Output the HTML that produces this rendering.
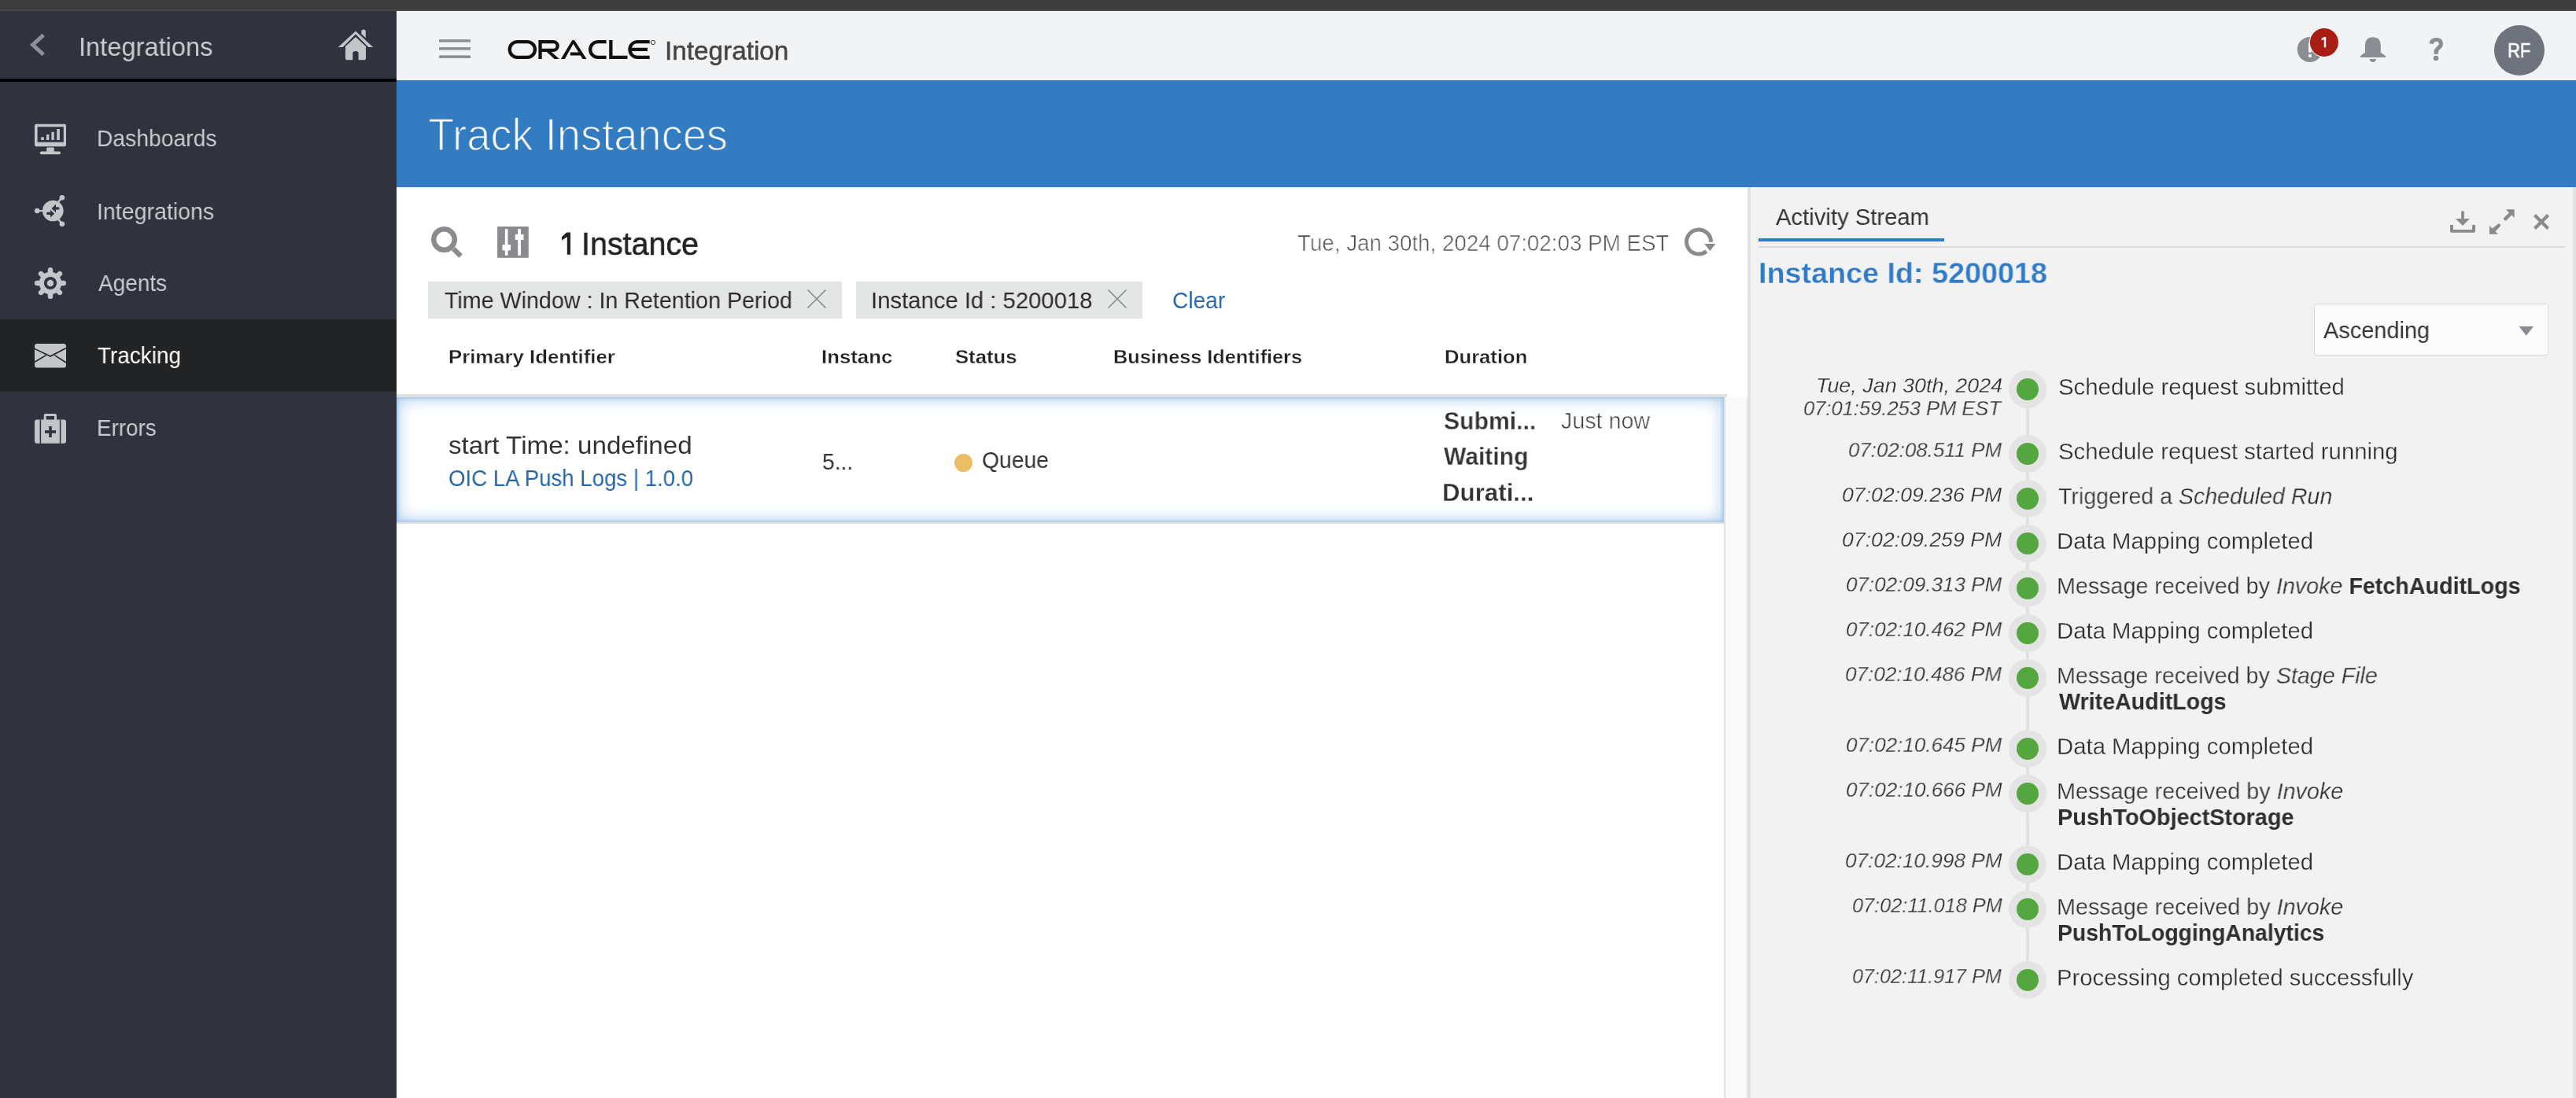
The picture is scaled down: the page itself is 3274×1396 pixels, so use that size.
<!DOCTYPE html>
<html><head><meta charset="utf-8">
<style>
html,body{margin:0;padding:0;width:3274px;height:1396px;overflow:hidden;background:#fff;font-family:"Liberation Sans",sans-serif;}
.a{position:absolute;}
.t{position:absolute;white-space:pre;line-height:1;transform-origin:0 0;will-change:transform;font-family:"Liberation Sans",sans-serif;}
svg{position:absolute;overflow:visible;}
</style></head><body>
<!-- top bar -->
<div class="a" style="left:0;top:0;width:3274px;height:12px;background:#3c3c3c"></div>
<div class="a" style="left:0;top:12px;width:3274px;height:2px;background:#474946"></div>
<!-- sidebar -->
<div class="a" style="left:0;top:14px;width:504px;height:1382px;background:#30323d"></div>
<div class="a" style="left:0;top:100px;width:504px;height:4px;background:#000"></div>
<div class="a" style="left:0;top:406px;width:504px;height:92px;background:#222325"></div>
<!-- header -->
<div class="a" style="left:504px;top:14px;width:2770px;height:88px;background:#f2f3f5"></div>
<!-- blue band -->
<div class="a" style="left:504px;top:102px;width:2770px;height:136px;background:#337cc2"></div>
<!-- main white -->
<div class="a" style="left:504px;top:238px;width:1717px;height:1158px;background:#ffffff"></div>
<!-- chips -->
<div class="a" style="left:544px;top:358px;width:526px;height:47px;background:#e4e6e6"></div>
<div class="a" style="left:1088px;top:358px;width:364px;height:47px;background:#e4e6e6"></div>
<!-- table header line -->
<div class="a" style="left:504px;top:501px;width:1691px;height:4px;background:#dfe0e0"></div>
<!-- selected row -->
<div class="a" style="left:504px;top:505px;width:1687px;height:159px;background:#fff;box-shadow:inset 0 0 4px 1px #9dc0e8, inset 0 0 20px 2px #a9caed"></div>
<div class="a" style="left:504px;top:664px;width:1687px;height:2px;background:#e0e0e0"></div>
<!-- scroll track -->
<div class="a" style="left:2191px;top:505px;width:2px;height:891px;background:#e3e3e3"></div>
<div class="a" style="left:2193px;top:505px;width:26px;height:891px;background:#f9f9f9"></div>
<div class="a" style="left:2219px;top:505px;width:2px;height:891px;background:#efefef"></div>
<!-- splitter -->
<div class="a" style="left:2221px;top:238px;width:4px;height:1158px;background:#dfe1e1"></div>
<!-- right panel -->
<div class="a" style="left:2225px;top:238px;width:1045px;height:1158px;background:#f2f2f2"></div>
<div class="a" style="left:3270px;top:238px;width:4px;height:1158px;background:#e0e2e2"></div>
<div class="a" style="left:2235px;top:303px;width:236px;height:4px;background:#2f7bd0"></div>
<div class="a" style="left:2235px;top:313px;width:1025px;height:2px;background:#dcdcdc"></div>
<!-- dropdown -->
<div class="a" style="left:2941px;top:386px;width:296px;height:64px;background:#fcfcfc;border:1px solid #d9d9d9;border-radius:3px"></div>
<!-- queue dot -->
<div class="a" style="left:1212.5px;top:576.5px;width:23px;height:23px;border-radius:50%;background:#ebbd64"></div>
<!-- avatar -->
<div class="a" style="left:3170px;top:32px;width:64px;height:64px;border-radius:50%;background:#6f737e"></div>

<!-- ICONS -->
<!-- sidebar chevron -->
<svg style="left:0;top:0" width="1" height="1"><polyline points="55.2,44.6 41.6,57 55.2,69.4" fill="none" stroke="#8d9096" stroke-width="5" stroke-linecap="butt"/></svg>
<!-- home -->
<svg style="left:0;top:0" width="1" height="1">
<path d="M429.8 60 L452 39.6 L474.2 60 L468.2 60 L452 43.4 L435.8 60 Z" fill="#c3c5c9"/>
<path d="M459.3 40 Q459.3 37.5 462 37.5 Q464.8 37.5 464.8 40 V48.2 L459.3 43.2 Z" fill="#c3c5c9"/>
<path d="M439 59 L452 47 L465 59 L465 74.3 Q465 76.3 463 76.3 L455.6 76.3 L455.6 67.5 Q455.6 65 452 65 Q448.3 65 448.3 67.5 L448.3 76.3 L441 76.3 Q439 76.3 439 74.3 Z" fill="#c3c5c9"/>
</svg>
<!-- sidebar icons -->
<svg style="left:0;top:0" width="1" height="1" fill="#c3c5c9">
<!-- dashboard -->
<path fill-rule="evenodd" d="M46 157.8 H82 Q84 157.8 84 159.8 V184.2 Q84 186.2 82 186.2 H46 Q44 186.2 44 184.2 V159.8 Q44 157.8 46 157.8 Z M47.6 161.2 V180.7 H80.8 V161.2 Z"/>
<rect x="52.1" y="174.3" width="3.7" height="3.7"/><rect x="59" y="170.9" width="3.4" height="7.1"/><rect x="65.4" y="167.8" width="3.4" height="10.2"/><rect x="72.2" y="164" width="3.7" height="14"/>
<rect x="59.2" y="187.6" width="9.6" height="6.5" rx="1.2"/><rect x="50.8" y="192.6" width="26.2" height="3.6" rx="1.8"/>
<!-- integrations -->
<circle cx="67.3" cy="268" r="13.3"/>
<circle cx="47.2" cy="268" r="3.3"/><circle cx="78.9" cy="251.2" r="3.3"/><circle cx="78.9" cy="284.7" r="3.3"/>
<path d="M47 267.1 H56 V268.9 H47Z M77.6 250.5 L79.8 251.8 L73.5 259.5 L71.5 258Z M77.6 285.1 L79.8 283.8 L73.5 276.1 L71.5 277.6Z"/>
<g fill="#30323d"><path d="M65.5 264.9 L71 259.6 V263.3 H74 A1.6 1.6 0 0 1 74 266.5 H71 V270.2 Z"/><path d="M69.4 271.4 L64 266.2 V269.8 H60.6 A1.6 1.6 0 0 0 60.6 273 H64 V276.6 Z"/></g><line x1="62.3" y1="264.3" x2="71.2" y2="272.7" stroke="#c3c5c9" stroke-width="1.3"/>
<!-- gear -->
<g transform="translate(64 360)"><circle r="14.3"/><rect x="-3.2" y="-20.1" width="6.4" height="10" rx="3.2" transform="rotate(0)"/><rect x="-3.2" y="-20.1" width="6.4" height="10" rx="3.2" transform="rotate(45)"/><rect x="-3.2" y="-20.1" width="6.4" height="10" rx="3.2" transform="rotate(90)"/><rect x="-3.2" y="-20.1" width="6.4" height="10" rx="3.2" transform="rotate(135)"/><rect x="-3.2" y="-20.1" width="6.4" height="10" rx="3.2" transform="rotate(180)"/><rect x="-3.2" y="-20.1" width="6.4" height="10" rx="3.2" transform="rotate(225)"/><rect x="-3.2" y="-20.1" width="6.4" height="10" rx="3.2" transform="rotate(270)"/><rect x="-3.2" y="-20.1" width="6.4" height="10" rx="3.2" transform="rotate(315)"/><circle r="8.1" fill="#30323d"/><circle r="4.25"/></g>
<!-- envelope -->
<rect x="44" y="437" width="40" height="30.4" rx="3"/>
<polyline points="44,443.4 64,453 84,442.5" fill="none" stroke="#222325" stroke-width="1.6"/>
<line x1="44" y1="460.3" x2="58.6" y2="451.6" stroke="#222325" stroke-width="1.6"/>
<line x1="84" y1="461" x2="69.4" y2="451.6" stroke="#222325" stroke-width="1.6"/>
<!-- briefcase -->
<path fill-rule="evenodd" d="M57.7 526 H70 Q72 526 72 528 V534 H69 V529 H58.7 V534 H55.7 V528 Q55.7 526 57.7 526 Z"/>
<rect x="44" y="533.6" width="40" height="30.2" rx="3"/>
<rect x="50.6" y="533.6" width="1.6" height="30.2" fill="#30323d"/><rect x="75.8" y="533.6" width="1.6" height="30.2" fill="#30323d"/>
<rect x="62.2" y="542" width="3.6" height="14" fill="#30323d"/><rect x="57" y="547.2" width="14" height="3.6" fill="#30323d"/>
</svg>
<!-- hamburger -->
<svg style="left:0;top:0" width="1" height="1" fill="#8b8e92">
<rect x="558" y="50.1" width="40" height="3.5"/><rect x="558" y="60.1" width="40" height="3.5"/><rect x="558" y="70.4" width="40" height="3.5"/>
</svg>
<!-- ORACLE logo -->
<svg style="left:0;top:0" width="1" height="1" fill="#111">
<path fill-rule="evenodd" d="M657.6 51 H670.1 A12 12 0 0 1 670.1 75 H657.6 A12 12 0 0 1 657.6 51 Z M657.6 55.3 A7.7 7.7 0 0 0 657.6 70.7 H670.1 A7.7 7.7 0 0 0 670.1 55.3 Z"/>
<path fill-rule="evenodd" d="M684.4 51 H703.3 A7.5 7.5 0 0 1 703.3 66 H700.8 L710.8 75 H704.6 L694.8 66 H688.7 V75 H684.4 Z M688.7 55.3 V61.7 H703.3 A3.2 3.2 0 0 0 703.3 55.3 Z"/>
<path d="M712.9 75 L727 51.5 Q728.7 49.8 730.4 51.5 L745.5 75 H740.5 L728.7 55.8 L717.8 75 Z M724.8 66.6 H735.3 L737.7 70.5 H724.8 Z"/>
<path d="M760 51 H770.6 V55.3 H760 A7.7 7.7 0 0 0 760 70.7 H770.6 V75 H760 A12 12 0 0 1 760 51 Z"/>
<path d="M774.2 51 H778.5 V70.7 H797.5 V75 H774.2 Z"/>
<path d="M810.3 51 H825.7 V55.3 H810.3 A7.7 7.7 0 0 0 802.95 60.7 H823 V65 H802.95 A7.7 7.7 0 0 0 810.3 70.7 H825.7 V75 H810.3 A12 12 0 0 1 810.3 51 Z"/>
<circle cx="830" cy="54" r="2.7" fill="none" stroke="#111" stroke-width="0.8"/>
</svg>
<!-- header right icons -->
<svg style="left:0;top:0" width="1" height="1" fill="#8a8d92">
<circle cx="2935.8" cy="62.9" r="16"/>
<rect x="2934.1" y="53.2" width="3.8" height="13.6" rx="1.9" fill="#fff"/><circle cx="2936" cy="70.9" r="2.1" fill="#fff"/>
<circle cx="2953.9" cy="53.9" r="19" fill="#f2f3f5"/>
<circle cx="2953.9" cy="53.9" r="18" fill="#a81e15"/>
<path d="M2953.5 46.9 H2956.2 V60.3 H2953.8 V49.9 L2950.5 51.2 V49.2 Z" fill="#fff"/>
<!-- bell -->
<path d="M3016 47.2 Q3025.8 47.2 3025.8 58 V66.8 L3032.1 71.2 V72.9 H2999.8 V71.2 L3006 66.8 V58 Q3006 47.2 3016 47.2 Z"/>
<path d="M3011.7 74.9 H3020 A4.15 4.15 0 0 1 3011.7 74.9 Z"/>
<!-- question -->
<path d="M3087.5 55.2 Q3088.5 48 3096.5 48 Q3105 48 3105 55.7 Q3105 59.2 3101.5 62.2 Q3098.8 64.5 3098.8 66 V68.7 H3093.5 V65.5 Q3093.5 62.5 3096.8 59.8 Q3099.8 57.3 3099.8 55.7 Q3099.8 52.8 3096.5 52.8 Q3093.5 52.8 3092.8 56 Z"/>
<circle cx="3096" cy="74" r="3.2"/>
</svg>
<!-- toolbar icons -->
<svg style="left:0;top:0" width="1" height="1" fill="#8a8b8e">
<circle cx="564.5" cy="304.5" r="13.25" fill="none" stroke="#8a8b8e" stroke-width="6.5"/>
<path d="M574 318.5 L578.5 314 L587.8 323.3 L583.3 327.8 Z"/>
<path d="M720.8 295.5 H725 V323.8 H720.8 V301.2 L714 305.4 V301.3 L720 295.5 Z" fill="#222"/>
<rect x="632.1" y="288" width="39.7" height="39.8"/>
<g fill="#fff"><rect x="641.8" y="291.1" width="3.7" height="33.7"/><rect x="638.4" y="311.1" width="10.6" height="7.2"/>
<rect x="658.2" y="291.1" width="3.8" height="33.7"/><rect x="654.8" y="297.9" width="10.7" height="7.1"/></g>
<!-- refresh -->
<path d="M2174.5 307.8 A15.5 15.5 0 1 0 2168.8 319.5" fill="none" stroke="#8a8b8e" stroke-width="5"/>
<path d="M2166.2 310 H2180.5 L2173.4 319 Z"/>
</svg>
<!-- chip X -->
<svg style="left:0;top:0" width="1" height="1" stroke="#8a8d91" stroke-width="1.7">
<line x1="1026.5" y1="368.5" x2="1049.5" y2="391.5"/><line x1="1049.5" y1="368.5" x2="1026.5" y2="391.5"/>
<line x1="1408.5" y1="368.5" x2="1431.5" y2="391.5"/><line x1="1431.5" y1="368.5" x2="1408.5" y2="391.5"/>
</svg>
<!-- right panel icons -->
<svg style="left:0;top:0" width="1" height="1" fill="#8a8b8e">
<path d="M3114 286 H3117.9 V292 H3142.1 V286 H3146 V294 Q3146 295.8 3144 295.8 H3116 Q3114 295.8 3114 294 Z"/>
<rect x="3128.1" y="268" width="3.8" height="11" rx="1.9"/>
<path d="M3120.9 278 H3139 L3130 287 Z"/>
<path d="M3184.9 266.2 H3195.7 V276.9 L3192.2 273.4 L3185.8 279.8 Q3184 281.2 3182.6 279.8 Q3181.2 278.4 3182.6 276.8 L3189 270.4 Z"/>
<path d="M3164 287 V297.7 H3175 L3171.5 294.2 L3177.5 288 Q3178.8 286.4 3177.4 285 Q3176 283.6 3174.4 285 L3167.6 290.6 Z"/>
<path d="M3220 275 L3223 272 L3230 279 L3237 272 L3240 275 L3233 282 L3240 289 L3237 292 L3230 285 L3223 292 L3220 289 L3227 282 Z"/>
<path d="M3201.6 415 H3220 L3210.8 426.7 Z"/>
</svg>

<div style="position:absolute;left:2575px;top:495px;width:4px;height:750.5px;background:#e1e1e1"></div><div style="position:absolute;left:2553px;top:471px;width:48px;height:48px;border-radius:50%;background:#e4e4e4"></div><div style="position:absolute;left:2563px;top:481px;width:28px;height:28px;border-radius:50%;background:#54a73f"></div><div style="position:absolute;left:2553px;top:553px;width:48px;height:48px;border-radius:50%;background:#e4e4e4"></div><div style="position:absolute;left:2563px;top:563px;width:28px;height:28px;border-radius:50%;background:#54a73f"></div><div style="position:absolute;left:2553px;top:610px;width:48px;height:48px;border-radius:50%;background:#e4e4e4"></div><div style="position:absolute;left:2563px;top:620px;width:28px;height:28px;border-radius:50%;background:#54a73f"></div><div style="position:absolute;left:2553px;top:667px;width:48px;height:48px;border-radius:50%;background:#e4e4e4"></div><div style="position:absolute;left:2563px;top:677px;width:28px;height:28px;border-radius:50%;background:#54a73f"></div><div style="position:absolute;left:2553px;top:724px;width:48px;height:48px;border-radius:50%;background:#e4e4e4"></div><div style="position:absolute;left:2563px;top:734px;width:28px;height:28px;border-radius:50%;background:#54a73f"></div><div style="position:absolute;left:2553px;top:781px;width:48px;height:48px;border-radius:50%;background:#e4e4e4"></div><div style="position:absolute;left:2563px;top:791px;width:28px;height:28px;border-radius:50%;background:#54a73f"></div><div style="position:absolute;left:2553px;top:838px;width:48px;height:48px;border-radius:50%;background:#e4e4e4"></div><div style="position:absolute;left:2563px;top:848px;width:28px;height:28px;border-radius:50%;background:#54a73f"></div><div style="position:absolute;left:2553px;top:927.5px;width:48px;height:48px;border-radius:50%;background:#e4e4e4"></div><div style="position:absolute;left:2563px;top:937.5px;width:28px;height:28px;border-radius:50%;background:#54a73f"></div><div style="position:absolute;left:2553px;top:984.5px;width:48px;height:48px;border-radius:50%;background:#e4e4e4"></div><div style="position:absolute;left:2563px;top:994.5px;width:28px;height:28px;border-radius:50%;background:#54a73f"></div><div style="position:absolute;left:2553px;top:1074.5px;width:48px;height:48px;border-radius:50%;background:#e4e4e4"></div><div style="position:absolute;left:2563px;top:1084.5px;width:28px;height:28px;border-radius:50%;background:#54a73f"></div><div style="position:absolute;left:2553px;top:1131.5px;width:48px;height:48px;border-radius:50%;background:#e4e4e4"></div><div style="position:absolute;left:2563px;top:1141.5px;width:28px;height:28px;border-radius:50%;background:#54a73f"></div><div style="position:absolute;left:2553px;top:1221.5px;width:48px;height:48px;border-radius:50%;background:#e4e4e4"></div><div style="position:absolute;left:2563px;top:1231.5px;width:28px;height:28px;border-radius:50%;background:#54a73f"></div>
<div class="t" style="left:100.45px;top:43.00px;font-size:33.72px;color:#c9cbcf;transform:scaleX(0.9680);">Integrations</div>
<div class="t" style="left:123.09px;top:162.00px;font-size:29.22px;color:#c9cbcf;transform:scaleX(0.9680);">Dashboards</div>
<div class="t" style="left:123.07px;top:254.50px;font-size:29.22px;color:#c9cbcf;transform:scaleX(0.9774);">Integrations</div>
<div class="t" style="left:124.70px;top:346.00px;font-size:29.22px;color:#c9cbcf;transform:scaleX(0.9584);">Agents</div>
<div class="t" style="left:124.26px;top:438.00px;font-size:29.22px;color:#ffffff;transform:scaleX(0.9555);">Tracking</div>
<div class="t" style="left:123.23px;top:530.00px;font-size:29.22px;color:#c9cbcf;transform:scaleX(0.9511);">Errors</div>
<div class="t" style="left:845.40px;top:48.60px;font-size:32.85px;color:#454545;transform:scaleX(1.0145);-webkit-text-stroke:0.5px #454545;">Integration</div>
<div class="t" style="left:3187.07px;top:52.10px;font-size:25.44px;color:#ffffff;transform:scaleX(0.8685);-webkit-text-stroke:0.7px #ffffff;">RF</div>
<div class="t" style="left:543.55px;top:141.80px;font-size:58.14px;color:#ffffff;transform:scaleX(0.9337);-webkit-text-stroke:1.6px #337cc2;">Track Instances</div>
<div class="t" style="left:738.82px;top:289.90px;font-size:41.28px;color:#222222;transform:scaleX(0.9554);-webkit-text-stroke:0.6px #222222;">Instance</div>
<div class="t" style="left:1648.57px;top:294.20px;font-size:30.09px;color:#4a4a4a;transform:scaleX(0.9222);-webkit-text-stroke:0.7px #ffffff;">Tue, Jan 30th, 2024 07:02:03 PM EST</div>
<div class="t" style="left:564.55px;top:367.20px;font-size:29.36px;color:#2a2a2a;transform:scaleX(0.9763);">Time Window : In Retention Period</div>
<div class="t" style="left:1106.71px;top:366.70px;font-size:29.36px;color:#2a2a2a;transform:scaleX(0.9967);">Instance Id : 5200018</div>
<div class="t" style="left:1489.68px;top:366.70px;font-size:29.36px;color:#2767a9;transform:scaleX(0.9571);">Clear</div>
<div class="t" style="left:570.39px;top:441.80px;font-size:24.42px;color:#222222;transform:scaleX(1.0554);-webkit-text-stroke:0.3px #ffffff;"><span style="font-weight:bold;">Primary Identifier</span></div>
<div class="t" style="left:1044.39px;top:441.80px;font-size:24.42px;color:#222222;transform:scaleX(1.0557);-webkit-text-stroke:0.3px #ffffff;"><span style="font-weight:bold;">Instanc</span></div>
<div class="t" style="left:1213.90px;top:441.80px;font-size:24.42px;color:#222222;transform:scaleX(1.0511);-webkit-text-stroke:0.3px #ffffff;"><span style="font-weight:bold;">Status</span></div>
<div class="t" style="left:1415.22px;top:441.80px;font-size:24.42px;color:#222222;transform:scaleX(1.0347);-webkit-text-stroke:0.3px #ffffff;"><span style="font-weight:bold;">Business Identifiers</span></div>
<div class="t" style="left:1836.40px;top:441.80px;font-size:24.42px;color:#222222;transform:scaleX(1.0494);-webkit-text-stroke:0.3px #ffffff;"><span style="font-weight:bold;">Duration</span></div>
<div class="t" style="left:570.48px;top:550.00px;font-size:31.98px;color:#333333;transform:scaleX(1.0374);">start Time: undefined</div>
<div class="t" style="left:569.71px;top:593.80px;font-size:29.07px;color:#2766a6;transform:scaleX(0.9501);">OIC LA Push Logs | 1.0.0</div>
<div class="t" style="left:1044.72px;top:572.60px;font-size:29.07px;color:#333333;transform:scaleX(0.9712);">5...</div>
<div class="t" style="left:1247.67px;top:570.20px;font-size:29.36px;color:#333333;transform:scaleX(0.9639);">Queue</div>
<div class="t" style="left:1834.53px;top:519.50px;font-size:30.52px;color:#333333;transform:scaleX(0.9877);-webkit-text-stroke:0.3px #ffffff;"><span style="font-weight:bold;">Submi...</span></div>
<div class="t" style="left:1835.00px;top:565.00px;font-size:30.52px;color:#333333;transform:scaleX(0.9849);-webkit-text-stroke:0.3px #ffffff;"><span style="font-weight:bold;">Waiting</span></div>
<div class="t" style="left:1833.05px;top:610.60px;font-size:30.52px;color:#333333;transform:scaleX(1.0244);-webkit-text-stroke:0.3px #ffffff;"><span style="font-weight:bold;">Durati...</span></div>
<div class="t" style="left:1983.55px;top:520.00px;font-size:29.80px;color:#3a3a3a;transform:scaleX(0.9618);-webkit-text-stroke:0.6px #ffffff;">Just now</div>
<div class="t" style="left:2256.50px;top:261.40px;font-size:29.80px;color:#333333;transform:scaleX(0.9815);">Activity Stream</div>
<div class="t" style="left:2234.64px;top:329.20px;font-size:37.79px;color:#2f7bc8;transform:scaleX(0.9983);-webkit-text-stroke:0.3px #f2f2f2;"><span style="font-weight:bold;">Instance Id: 5200018</span></div>
<div class="t" style="left:2953.00px;top:405.30px;font-size:29.51px;color:#333333;transform:scaleX(0.9807);">Ascending</div>
<div class="t" style="left:2308.00px;top:477.00px;font-size:26.60px;color:#2e2e2e;transform:scaleX(1.0108);-webkit-text-stroke:0.3px #f2f2f2;"><span style="font-style:italic;">Tue, Jan 30th, 2024</span></div>
<div class="t" style="left:2292.00px;top:506.20px;font-size:26.60px;color:#2e2e2e;transform:scaleX(0.9588);-webkit-text-stroke:0.3px #f2f2f2;"><span style="font-style:italic;">07:01:59.253 PM EST</span></div>
<div class="t" style="left:2615.58px;top:478.00px;font-size:28.92px;color:#2e2e2e;transform:scaleX(1.0154);-webkit-text-stroke:0.3px #f2f2f2;">Schedule request submitted</div>
<div class="t" style="left:2349.19px;top:559.00px;font-size:26.60px;color:#2e2e2e;transform:scaleX(0.9721);-webkit-text-stroke:0.3px #f2f2f2;"><span style="font-style:italic;">07:02:08.511 PM</span></div>
<div class="t" style="left:2615.58px;top:560.00px;font-size:28.92px;color:#2e2e2e;transform:scaleX(1.0135);-webkit-text-stroke:0.3px #f2f2f2;">Schedule request started running</div>
<div class="t" style="left:2340.97px;top:616.00px;font-size:26.60px;color:#2e2e2e;transform:scaleX(1.0032);-webkit-text-stroke:0.3px #f2f2f2;"><span style="font-style:italic;">07:02:09.236 PM</span></div>
<div class="t" style="left:2616.05px;top:617.00px;font-size:28.92px;color:#2e2e2e;transform:scaleX(0.9879);-webkit-text-stroke:0.3px #f2f2f2;">Triggered a <span style="font-style:italic;">Scheduled Run</span></div>
<div class="t" style="left:2340.97px;top:673.00px;font-size:26.60px;color:#2e2e2e;transform:scaleX(1.0032);-webkit-text-stroke:0.3px #f2f2f2;"><span style="font-style:italic;">07:02:09.259 PM</span></div>
<div class="t" style="left:2614.21px;top:674.00px;font-size:28.92px;color:#2e2e2e;transform:scaleX(1.0148);-webkit-text-stroke:0.3px #f2f2f2;">Data Mapping completed</div>
<div class="t" style="left:2346.09px;top:730.00px;font-size:26.60px;color:#2e2e2e;transform:scaleX(0.9780);-webkit-text-stroke:0.3px #f2f2f2;"><span style="font-style:italic;">07:02:09.313 PM</span></div>
<div class="t" style="left:2614.26px;top:731.00px;font-size:28.92px;color:#2e2e2e;transform:scaleX(0.9919);-webkit-text-stroke:0.3px #f2f2f2;">Message received by <span style="font-style:italic;">Invoke</span> <span style="font-weight:bold;-webkit-text-stroke-width:0;">FetchAuditLogs</span></div>
<div class="t" style="left:2346.09px;top:787.00px;font-size:26.60px;color:#2e2e2e;transform:scaleX(0.9780);-webkit-text-stroke:0.3px #f2f2f2;"><span style="font-style:italic;">07:02:10.462 PM</span></div>
<div class="t" style="left:2614.21px;top:788.00px;font-size:28.92px;color:#2e2e2e;transform:scaleX(1.0148);-webkit-text-stroke:0.3px #f2f2f2;">Data Mapping completed</div>
<div class="t" style="left:2345.28px;top:844.00px;font-size:26.60px;color:#2e2e2e;transform:scaleX(0.9819);-webkit-text-stroke:0.3px #f2f2f2;"><span style="font-style:italic;">07:02:10.486 PM</span></div>
<div class="t" style="left:2614.26px;top:845.00px;font-size:28.92px;color:#2e2e2e;transform:scaleX(0.9914);-webkit-text-stroke:0.3px #f2f2f2;">Message received by <span style="font-style:italic;">Stage File</span></div>
<div class="t" style="left:2616.50px;top:878.40px;font-size:28.92px;color:#2e2e2e;transform:scaleX(0.9902);"><span style="font-weight:bold;">WriteAuditLogs</span></div>
<div class="t" style="left:2346.09px;top:933.50px;font-size:26.60px;color:#2e2e2e;transform:scaleX(0.9780);-webkit-text-stroke:0.3px #f2f2f2;"><span style="font-style:italic;">07:02:10.645 PM</span></div>
<div class="t" style="left:2614.21px;top:934.50px;font-size:28.92px;color:#2e2e2e;transform:scaleX(1.0148);-webkit-text-stroke:0.3px #f2f2f2;">Data Mapping completed</div>
<div class="t" style="left:2345.69px;top:990.50px;font-size:26.60px;color:#2e2e2e;transform:scaleX(0.9800);-webkit-text-stroke:0.3px #f2f2f2;"><span style="font-style:italic;">07:02:10.666 PM</span></div>
<div class="t" style="left:2614.25px;top:991.50px;font-size:28.92px;color:#2e2e2e;transform:scaleX(0.9943);-webkit-text-stroke:0.3px #f2f2f2;">Message received by <span style="font-style:italic;">Invoke</span></div>
<div class="t" style="left:2614.70px;top:1024.90px;font-size:28.92px;color:#2e2e2e;transform:scaleX(0.9971);"><span style="font-weight:bold;">PushToObjectStorage</span></div>
<div class="t" style="left:2344.68px;top:1080.50px;font-size:26.60px;color:#2e2e2e;transform:scaleX(0.9849);-webkit-text-stroke:0.3px #f2f2f2;"><span style="font-style:italic;">07:02:10.998 PM</span></div>
<div class="t" style="left:2614.21px;top:1081.50px;font-size:28.92px;color:#2e2e2e;transform:scaleX(1.0148);-webkit-text-stroke:0.3px #f2f2f2;">Data Mapping completed</div>
<div class="t" style="left:2353.51px;top:1137.50px;font-size:26.60px;color:#2e2e2e;transform:scaleX(0.9506);-webkit-text-stroke:0.3px #f2f2f2;"><span style="font-style:italic;">07:02:11.018 PM</span></div>
<div class="t" style="left:2614.25px;top:1138.50px;font-size:28.92px;color:#2e2e2e;transform:scaleX(0.9943);-webkit-text-stroke:0.3px #f2f2f2;">Message received by <span style="font-style:italic;">Invoke</span></div>
<div class="t" style="left:2614.73px;top:1171.90px;font-size:28.92px;color:#2e2e2e;transform:scaleX(0.9794);"><span style="font-weight:bold;">PushToLoggingAnalytics</span></div>
<div class="t" style="left:2354.41px;top:1227.50px;font-size:26.60px;color:#2e2e2e;transform:scaleX(0.9461);-webkit-text-stroke:0.3px #f2f2f2;"><span style="font-style:italic;">07:02:11.917 PM</span></div>
<div class="t" style="left:2614.21px;top:1228.50px;font-size:28.92px;color:#2e2e2e;transform:scaleX(1.0117);-webkit-text-stroke:0.3px #f2f2f2;">Processing completed successfully</div>

</body></html>
